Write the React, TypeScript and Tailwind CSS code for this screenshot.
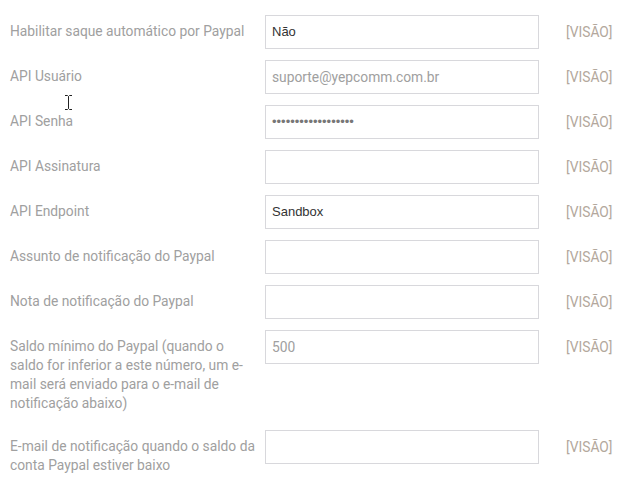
import React from "react";

type Field = {
  label: string;
  value?: string;
  kind?: "select" | "text" | "password";
};

const fields: Field[] = [
  { label: "Habilitar saque automático por Paypal", value: "Não", kind: "select" },
  { label: "API Usuário", value: "suporte@yepcomm.com.br", kind: "text" },
  { label: "API Senha", value: "••••••••••••••••••", kind: "password" },
  { label: "API Assinatura" },
  { label: "API Endpoint", value: "Sandbox", kind: "select" },
  { label: "Assunto de notificação do Paypal" },
  { label: "Nota de notificação do Paypal" },
  {
    label:
      "Saldo mínimo do Paypal (quando o saldo for inferior a este número, um e-mail será enviado para o e-mail de notificação abaixo)",
    value: "500",
    kind: "text",
  },
  { label: "E-mail de notificação quando o saldo da conta Paypal estiver baixo" },
];

function FieldBox({ field }: { field: Field }) {
  let content: React.ReactNode = null;
  if (field.kind === "select") {
    content = (
      <span className="font-['Liberation_Sans',Arial,sans-serif] text-[13px] text-[#333]">
        {field.value}
      </span>
    );
  } else if (field.kind === "password") {
    content = (
      <span className="font-['Liberation_Sans',Arial,sans-serif] text-[13px] text-[#777]">
        {field.value}
      </span>
    );
  } else if (field.kind === "text") {
    content = <span className="text-[13.8px] text-[#a0a0a0]">{field.value}</span>;
  }
  return (
    <div className="ml-[10px] flex h-[34px] w-[274px] shrink-0 items-center border border-[#d8d8dc] bg-white px-[6px]">
      {content}
    </div>
  );
}

export default function App() {
  return (
    <div className="relative min-h-screen bg-white pt-[15px] font-['Roboto',sans-serif]">
      {fields.map((f) => (
        <div key={f.label} className="mb-[11px] flex items-start">
          <div className="ml-[10px] w-[245px] shrink-0 pt-[7px] pb-[6px] text-[13.8px] leading-[19px] text-[#a0a0a0]">
            {f.label}
          </div>
          <FieldBox field={f} />
          <div className="ml-[27px] pt-[8px] text-[13.8px] leading-[19px] text-[#b3a89c]">[VISÃO]</div>
        </div>
      ))}

      {/* text cursor */}
      <svg className="absolute left-[64px] top-[94px]" width="9" height="17" viewBox="0 0 9 17">
        <path d="M1 1.5h2.5L4.5 2.5L5.5 1.5H8M4.5 2.5V14.5M1 15.5h2.5L4.5 14.5L5.5 15.5H8" fill="none" stroke="#fff" strokeWidth="2.5" />
        <path d="M1 1.5h2.5L4.5 2.5L5.5 1.5H8M4.5 2.5V14.5M1 15.5h2.5L4.5 14.5L5.5 15.5H8" fill="none" stroke="#222" strokeWidth="1" />
      </svg>
    </div>
  );
}
